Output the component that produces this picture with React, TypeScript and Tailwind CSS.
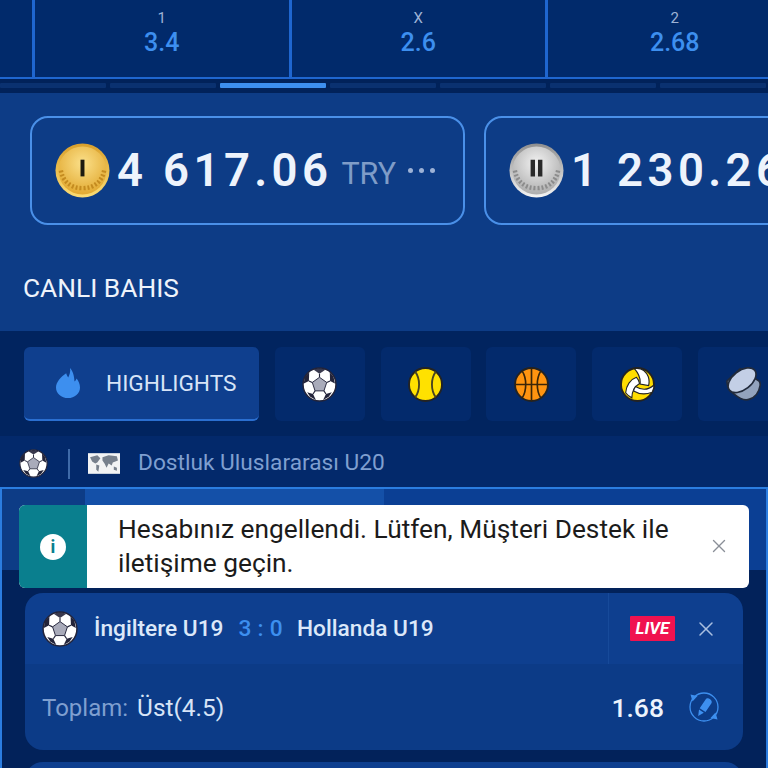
import React from 'react';
import { X } from 'lucide-react';

const Ball = ({ size = 35 }: { size?: number }) => (
  <svg width={size} height={size} viewBox="0 0 34 34">
    <circle cx="17" cy="17" r="16" fill="#fff" stroke="#23243a" strokeWidth="1.400" />
    <polygon points="17,10 24,15 21.300,23.200 12.700,23.200 10,15" fill="#a9abba" stroke="#23243a" strokeWidth="0.900" />
    <path d="M17 10V6.500M24 15l3.300-1.500M21.300 23.200l2 3M12.700 23.200l-2 3M10 15l-3.300-1.500" stroke="#23243a" strokeWidth="1.100" fill="none" />
    <g fill="#23243a">
      <path d="M11 2.500 17 6.500 23 2.500 17 1Z" opacity="0.900" />
      <path d="M27 5 27.300 13.500 32 16 30.500 9Z" />
      <path d="M2.500 9.500 1.800 16 6.700 13.500 7 5Z" />
      <path d="M29 24.500 23.300 26.200 20.500 32 26 29Z" />
      <path d="M5 24.500 10.700 26.200 13.500 32 8 29Z" />
    </g>
  </svg>
);

const Tennis = () => (
  <svg width="35" height="35" viewBox="0 0 34 34">
    <circle cx="17" cy="17" r="16" fill="#ffe100" stroke="#232323" strokeWidth="1.800" />
    <path d="M7 4.500c5 7 5 18 0 25M27 4.500c-5 7-5 18 0 25" fill="none" stroke="#4a4520" strokeWidth="1.800" />
  </svg>
);

const Basket = () => (
  <svg width="35" height="35" viewBox="0 0 34 34">
    <circle cx="17" cy="17" r="16" fill="#ff9410" stroke="#232323" strokeWidth="1.800" />
    <path d="M17 1v32M1 17h32M8 4c4.500 7 4.500 19 0 26M26 4c-4.500 7-4.500 19 0 26" fill="none" stroke="#3a2508" strokeWidth="1.600" />
  </svg>
);

const Volley = () => (
  <svg width="35" height="35" viewBox="0 0 34 34">
    <circle cx="17" cy="17" r="16" fill="#ffdd00" stroke="#232323" strokeWidth="1.800" />
    <path d="M14 1.500c6-1 11 2 13.500 8 1 3 1 5.500.3 8.500l-8.300-1.500c.6-5-1.500-10.500-5.500-15Z" fill="#fff" stroke="#232323" strokeWidth="1.100" />
    <path d="M16 10c-6 2-10 8-10.500 15 1.800 2.300 3.500 3.800 6 5 0-6 2.500-11 7.500-14-.4-2.400-1.400-4.400-3-6Z" fill="#fff" stroke="#232323" strokeWidth="1.100" />
    <path d="M15 19c5 3 12 4 18-1.500.2 2.500-.6 5-1.800 7-6.200 2.500-13 1.800-18-1.200.2-1.600.9-3 1.800-4.300Z" fill="#fff" stroke="#232323" strokeWidth="1.100" />
  </svg>
);

const Puck = () => (
  <svg width="36" height="36" viewBox="0 0 38 38">
    <path d="M2 16c0 5 3 10 8 14 6 5 11 7 16 5 6-2 10-8 11-14 .3-2 0-4-1-5L16 3Z" fill="#93a3bd" stroke="#222b3c" strokeWidth="1.800" />
    <ellipse cx="18" cy="15" rx="17" ry="10" transform="rotate(-38 18 15)" fill="#c3cfe6" stroke="#222b3c" strokeWidth="1.800" />
  </svg>
);

const Coin = ({ silver }: { silver?: boolean }) => {
  const id = silver ? 's' : 'g';
  return (
    <svg width="55" height="55" viewBox="0 0 56 56" className="shrink-0">
      <defs>
        <radialGradient id={`${id}in`} cx="50%" cy="35%" r="70%">
          <stop offset="0%" stopColor={silver ? '#f2f2f2' : '#fbe08a'} />
          <stop offset="100%" stopColor={silver ? '#a8a8a8' : '#e0a52a'} />
        </radialGradient>
        <linearGradient id={`${id}rim`} x1="0" y1="0" x2="0" y2="1">
          <stop offset="0%" stopColor={silver ? '#8f8f8f' : '#d9a02c'} />
          <stop offset="100%" stopColor={silver ? '#f4f4f4' : '#fbdc74'} />
        </linearGradient>
      </defs>
      <circle cx="28" cy="28" r="27.500" fill={`url(#${id}rim)`} />
      <circle cx="28" cy="28" r="24.500" fill={`url(#${id}in)`} />
      <path d="M6 28c2 11 10 18 22 18s20-7 22-18" fill="none" stroke={silver ? '#8c8c8c' : '#c48b1f'} strokeWidth="4.500" strokeDasharray="2 2" />
      {silver ? (
        <path d="M22 17h4.500v17H22zM29.500 17H34v17h-4.500z" fill="#2a2a2a" />
      ) : (
        <rect x="26" y="17" width="4" height="17" fill="#1d1a10" />
      )}
    </svg>
  );
};

const FlagMap = () => (
  <svg width="32" height="21" viewBox="0 0 31 20">
    <rect width="31" height="20" fill="#f2f3f4" />
    <path d="M2 4l7-2 3 3-3 4-2 1-3-2ZM8 11l3 1-1 6-2-2ZM14 4l6-2 8 1 1 4-5 2-1 3-3-2-2 4-2-4-2-3ZM25 13l3 1 0 3-3-1Z" fill="#77808c" />
  </svg>
);

const BetIcon = () => (
  <svg width="32" height="32" viewBox="0 0 32 32" fill="none">
    <circle cx="16" cy="16" r="14" stroke="#3d8fef" strokeWidth="1.300" />
    <path d="M2.500 3.500 9.500 5 4.500 10.500ZM29.500 28.500l-7-1.500 5-5.500Z" fill="#3d8fef" />
    <path d="M18.500 7.500c1.800-1 4.800 1 5.200 3 .1.700 0 1.300-.4 1.900l-5.800 8.600-5.800-3.800 5.900-8.700c.2-.4.500-.7.900-1ZM11 18.500l4.800 3.200-5.600 3.300Z" fill="#3d8fef" />
  </svg>
);

const Flame = () => (
  <svg width="24" height="30" viewBox="0 0 24 30">
    <path d="M14 0c.8 4-.6 7-1.800 9.400-.8-1-1.600-2.600-2-4.200C4.600 9 0 14.200 0 19.400 0 25.400 5.400 30 12 30s12-4.600 12-10.600c0-3.400-1.400-6.400-3.400-9-.4 1.200-1.100 2.400-2.100 3.200C18.300 8.400 17 3 14 0Z" fill="#3d8fef" />
  </svg>
);

const odds = [
  { label: '1', value: '3.4' },
  { label: 'X', value: '2.6' },
  { label: '2', value: '2.68' },
];

const sports = [<Ball />, <Tennis />, <Basket />, <Volley />, <Puck />];

const App = () => {
  return (
    <div className="w-[768px] h-[768px] overflow-hidden relative bg-[#02225a] font-['Roboto',sans-serif]">
      {/* Odds row */}
      <div className="h-[79px] flex bg-[#012a6b] border-b-2 border-[#1f66cf] pl-[32px]">
        {odds.map((o) => (
          <div
            key={o.label}
            className="w-[256.500px] shrink-0 border-l-[3px] border-[#1f66cf] flex flex-col items-center pt-[9px]"
          >
            <span className="text-[15px] leading-[18px] text-[#9db2d6]">{o.label}</span>
            <span className="mt-[1px] text-[25px] leading-[30px] font-medium text-[#3d8fef]">{o.value}</span>
          </div>
        ))}
      </div>

      {/* Pager */}
      <div className="h-[14px] bg-[#01225a] flex gap-[4px] pt-[4px]">
        {[0, 1, 2, 3, 4, 5, 6].map((i) => (
          <div key={i} className={`w-[106px] h-[5px] rounded-[1px] ${i === 2 ? 'bg-[#3d8fef]' : 'bg-[#0a3170]'}`} />
        ))}
      </div>

      {/* Balances */}
      <div className="h-[238px] bg-[#0d3c86] pt-[23px] pl-[30px] overflow-hidden">
        <div className="flex gap-[19px]">
          <div className="w-[435px] h-[109px] shrink-0 border-2 border-[#4a90e8] rounded-[18px] flex items-center pl-[23px]">
            <Coin />
            <span className="ml-[7px] mt-[2px] text-[45.500px] font-semibold tracking-[4.400px] text-[#edf3fc]">4 617.06</span>
            <span className="ml-[9px] mt-[6px] text-[30.500px] text-[#7f9cc8]">TRY</span>
            <span className="ml-[12px] flex gap-[6px]">
              <i className="w-[5px] h-[5px] rounded-full bg-[#9db2d6]" />
              <i className="w-[5px] h-[5px] rounded-full bg-[#9db2d6]" />
              <i className="w-[5px] h-[5px] rounded-full bg-[#9db2d6]" />
            </span>
          </div>
          <div className="w-[435px] h-[109px] shrink-0 border-2 border-[#4a90e8] rounded-[18px] flex items-center pl-[23px]">
            <Coin silver />
            <span className="ml-[7px] mt-[2px] text-[45.500px] font-semibold tracking-[4.400px] text-[#edf3fc]">1 230.26</span>
          </div>
        </div>
        <p className="mt-[48px] -ml-[7px] text-[26.300px] leading-[30px] text-[#eef3fb]">CANLI BAHIS</p>
      </div>

      {/* Sports */}
      <div className="h-[105px] bg-[#01245f] flex gap-[15.800px] pl-[24px] pt-[16px]">
        <div className="w-[235px] h-[74px] shrink-0 rounded-[6px] bg-[#0f3f8e] border-b-2 border-[#2b6fd0] flex items-center pl-[32px] gap-[26px]">
          <Flame />
          <span className="mt-[2px] text-[22.700px] text-[#d7e4f7]">HIGHLIGHTS</span>
        </div>
        {sports.map((s, i) => (
          <div key={i} className="w-[90px] h-[74px] shrink-0 rounded-[6px] bg-[#032a6c] flex items-center justify-center">
            {s}
          </div>
        ))}
      </div>

      {/* League */}
      <div className="h-[51px] bg-[#03296b] flex items-center pl-[19px] pt-[4px]">
        <Ball size={29} />
        <div className="w-[2px] h-[30px] bg-[#3f6aa8] ml-[20px]" />
        <div className="ml-[18px] flex"><FlagMap /></div>
        <span className="ml-[18px] text-[22.700px] text-[#7f9fd0]">Dostluk Uluslararası U20</span>
      </div>

      {/* Coupon */}
      <div className="border-x-2 border-t-2 border-[#2b7de0] h-[300px]">
        <div className="flex h-[81px]">
          <div className="w-[83px] bg-[#0d3c86]" />
          <div className="w-[299px] bg-[#1450a8]" />
          <div className="flex-1 bg-[#0b3f94]" />
        </div>
        <div className="ml-[23px] w-[718px] mt-[23px] rounded-[18px] overflow-hidden">
          <div className="h-[71px] bg-[#0e3f8f] flex items-center pl-[17px]">
            <Ball size={36} />
            <span className="ml-[16px] mt-[2px] text-[22.700px] font-medium text-[#dce8f9]">İngiltere U19</span>
            <span className="ml-[15px] mt-[2px] text-[22.700px] font-medium tracking-[0.300px] text-[#3d8fef]">3 : 0</span>
            <span className="ml-[14px] mt-[2px] text-[22.700px] font-medium text-[#dce8f9]">Hollanda U19</span>
            <div className="ml-auto w-[135px] h-full border-l border-[#174a9a] flex items-center pl-[21px]">
              <span className="w-[45px] h-[25px] bg-[#f0124f] rounded-[1px] flex items-center justify-center text-[17px] font-bold italic text-white">LIVE</span>
              <X size={24} strokeWidth={1.500} className="ml-[19px] text-[#a9bfe0]" />
            </div>
          </div>
          <div className="h-[86px] bg-[#0c3b87] flex items-center pl-[17px]">
            <span className="mt-[2px] text-[24px] text-[#7f9fd0]">Toplam:</span>
            <span className="ml-[9px] mt-[2px] text-[24.400px] text-[#d7e4f7]">Üst(4.5)</span>
            <span className="ml-auto mt-[2px] text-[26.500px] font-medium text-[#edf3fc]">1.68</span>
            <span className="ml-[24px] mr-[23px]"><BetIcon /></span>
          </div>
        </div>
        <div className="ml-[23px] w-[718px] mt-[12px] h-[40px] rounded-t-[18px] bg-[#0e3f8f]" />
      </div>

      {/* Notification */}
      <div className="absolute left-[19px] top-[505px] w-[730px] h-[83px] rounded-[6px] overflow-hidden flex bg-white">
        <div className="w-[68px] bg-[#0a7f8e] flex items-center justify-center">
          <div className="w-[26px] h-[26px] rounded-full bg-white flex items-center justify-center text-[18px] font-bold text-[#0a7f8e]">i</div>
        </div>
        <p className="w-[590px] shrink-0 pl-[31px] pt-[7px] text-[26.300px] leading-[34px] text-[#1b1b1b]">
          Hesabınız engellendi. Lütfen, Müşteri Destek ile iletişime geçin.
        </p>
        <X size={22} strokeWidth={1.500} className="ml-[31px] mt-[30px] text-[#8a8f98]" />
      </div>
    </div>
  );
};

export default App;
